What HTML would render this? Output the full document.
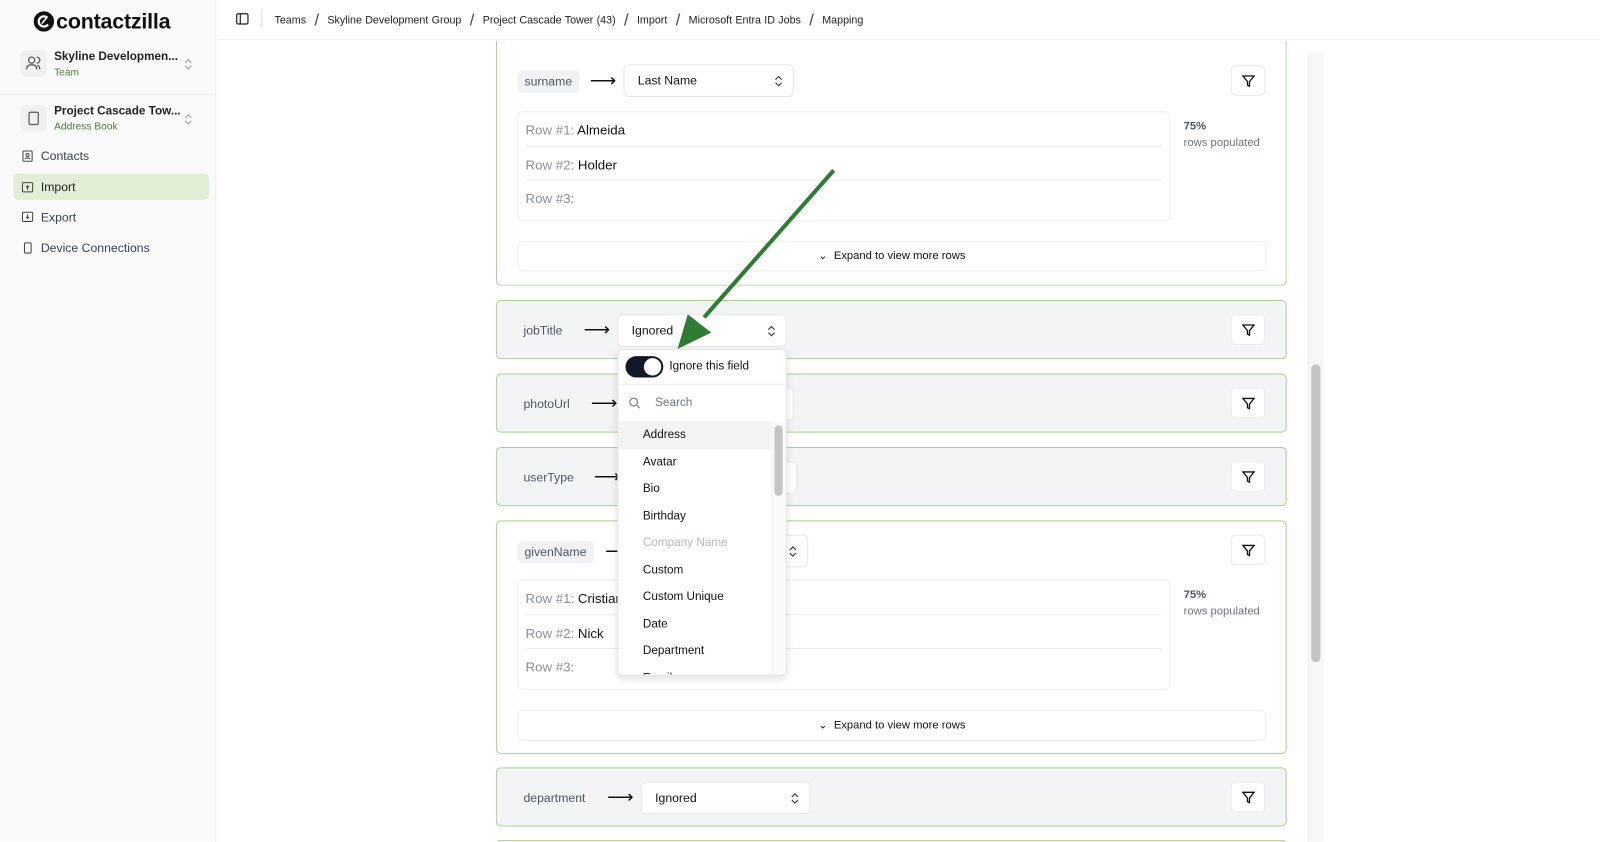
<!DOCTYPE html>
<html><head><style>
*{box-sizing:border-box;margin:0;padding:0}
html,body{width:1600px;height:842px;overflow:hidden;background:#fff;font-family:"Liberation Sans",sans-serif;color:#111827}
#clip{position:relative;width:1600px;height:842px;overflow:hidden}
#w{position:absolute;left:0;top:0;width:1568px;height:825px;overflow:hidden;transform:scale(1.02041);transform-origin:0 0}
.a{position:absolute}
.side{left:0;top:0;width:212px;height:825px;background:#fafafa;border-right:1px solid #ececec}
.nav{position:absolute;left:13px;width:192px;height:26px;border-radius:5px;font-size:12px;color:#374151;padding-left:27px;line-height:26px}
.nav svg{position:absolute;left:8px;top:7px}
.card{position:absolute;left:486px;width:775px;border:1px solid #a9d091;border-radius:5px;background:#fff}
.ig{background:#f3f4f6}
.lbl{position:absolute;font-size:12px;color:#4b5563}
.chip{background:#f1f2f4;border-radius:5px;padding:4px 7px}
.arr{position:absolute;font-size:18px;color:#111;line-height:20px}
.sel{position:absolute;height:32px;background:#fff;border:1px solid #e5e7eb;border-radius:5px;font-size:12px;line-height:30px;padding-left:13px;color:#111}
.sel svg{position:absolute;right:10px;top:10px}
.flt{position:absolute;right:20px;width:34px;height:30px;border:1px solid #e9eaec;border-radius:5px;background:#fff}
.flt svg{position:absolute;left:10px;top:8px}
.rows{position:absolute;left:20px;width:640px;border:1px solid #eceef0;border-radius:5px;background:#fff}
.row{height:33.5px;margin:0 7px;border-bottom:1px solid #eceef0;font-size:13px;line-height:35px;color:#111}
.row:last-child{border-bottom:none}
.row span{color:#8a8f98}
.pct{position:absolute;left:673px;font-size:11px;color:#6b7280;line-height:16px}
.pct b{color:#4b5563}
.exp{position:absolute;left:20px;width:734px;height:30px;border:1px solid #eceef0;border-radius:5px;font-size:11px;text-align:center;line-height:29px;color:#111}
.dd{left:605px;top:342px;width:166px;height:320px;background:#fff;border:1px solid #e5e7eb;border-radius:5px;box-shadow:0 3px 8px rgba(0,0,0,.12);overflow:hidden}
.it{height:26.5px;line-height:26.5px;font-size:11.5px;padding-left:24px;color:#111}
.sl{font-size:16px;color:#444;margin:0 5px;vertical-align:-2px}
</style></head><body><div id="clip"><div id="w">
<div class="a side">
 <div class="a" style="left:33px;top:10px;font-size:21px;font-weight:bold;color:#111;letter-spacing:-.2px"><svg width="20" height="20" viewBox="0 0 20 20" style="vertical-align:-3px;margin-right:2px"><circle cx="10" cy="10" r="10" fill="#111"/><path d="M13.5 6.5A5 5 0 1 0 14 13" fill="none" stroke="#fff" stroke-width="2.2"/><path d="M8 12l5-6" stroke="#fff" stroke-width="1.5"/></svg>contactzilla</div>
 <div class="a" style="left:20px;top:49px;width:26px;height:26px;background:#eef0f2;border-radius:6px"><svg width="26" height="26" viewBox="0 0 26 26" fill="none" stroke="#555" stroke-width="1.2"><circle cx="11" cy="10" r="3"/><path d="M6 19c0-3 2-4.5 5-4.5s5 1.5 5 4.5M16 7a3 3 0 010 6M19 19c0-2-1-3.5-2.5-4"/></svg></div>
 <div class="a" style="left:53px;top:50px;font-size:11.5px;font-weight:bold;color:#222">Skyline Developmen...</div>
 <div class="a" style="left:53px;top:66px;font-size:10px;color:#4b7a3a">Team</div>
 <svg class="a" style="left:180px;top:57px" width="9" height="12" viewBox="0 0 9 12" fill="none" stroke="#999" stroke-width="1"><path d="M1.5 4.5L4.5 1.5 7.5 4.5M1.5 7.5l3 3 3-3"/></svg>
 <div class="a" style="left:0;top:92px;width:211px;border-top:1px solid #ececec"></div>
 <div class="a" style="left:20px;top:103px;width:26px;height:26px;background:#eef0f2;border-radius:6px"><svg width="26" height="26" viewBox="0 0 26 26" fill="none" stroke="#555" stroke-width="1.2"><rect x="8.5" y="7" width="9" height="12" rx="1.5"/></svg></div>
 <div class="a" style="left:53px;top:103px;font-size:11.5px;font-weight:bold;color:#222">Project Cascade Tow...</div>
 <div class="a" style="left:53px;top:119px;font-size:10px;color:#4b7a3a">Address Book</div>
 <svg class="a" style="left:180px;top:111px" width="9" height="12" viewBox="0 0 9 12" fill="none" stroke="#999" stroke-width="1"><path d="M1.5 4.5L4.5 1.5 7.5 4.5M1.5 7.5l3 3 3-3"/></svg>
 <div class="nav" style="top:140px">Contacts<svg width="12" height="12" viewBox="0 0 12 12" fill="none" stroke="#444"><rect x="1.5" y="1" width="9" height="10" rx="1"/><circle cx="6" cy="5" r="1.5"/><path d="M3.5 9c.5-1.5 4.5-1.5 5 0"/></svg></div>
 <div class="nav" style="top:170px;background:#e2efd6;color:#222">Import<svg width="12" height="12" viewBox="0 0 12 12" fill="none" stroke="#444"><rect x="1" y="2" width="10" height="9" rx="1"/><path d="M6 9V5M4.5 6.5L6 5l1.5 1.5"/></svg></div>
 <div class="nav" style="top:200px">Export<svg width="12" height="12" viewBox="0 0 12 12" fill="none" stroke="#444"><rect x="1" y="1" width="10" height="9" rx="1"/><path d="M6 3v4M4.5 5.5L6 7l1.5-1.5"/></svg></div>
 <div class="nav" style="top:230px">Device Connections<svg width="12" height="12" viewBox="0 0 12 12" fill="none" stroke="#444"><rect x="3" y="1" width="6.5" height="10" rx="1"/></svg></div>
</div>
<div class="a" style="left:213px;top:38px;width:1355px;border-top:1px solid #eef0f2"></div>
<svg class="a" style="left:231px;top:12px" width="13" height="13" viewBox="0 0 13 13" fill="none" stroke="#222" stroke-width="1.2"><rect x="1" y="1.5" width="11" height="10" rx="1.5"/><path d="M4.5 1.5v10"/></svg>
<div class="a" style="left:256px;top:10px;height:17px;border-left:1px solid #ddd"></div>
<div class="a" style="left:269px;top:12px;font-size:10.5px;color:#222;word-spacing:.3px">Teams <span class="sl">/</span> Skyline Development Group <span class="sl">/</span> Project Cascade Tower (43) <span class="sl">/</span> Import <span class="sl">/</span> Microsoft Entra ID Jobs <span class="sl">/</span> Mapping</div>
<div class="a" style="left:1282px;top:52px;width:15px;height:773px;background:#f7f7f7;border-left:1px solid #eee"></div>
<div class="a" style="left:1285px;top:357px;width:9px;height:292px;background:#c4c4c4;border-radius:5px"></div>

<div class="card" style="top:40px;height:240px;border-top:none;border-radius:0 0 5px 5px">
 <div class="lbl chip" style="left:20px;top:29px">surname</div><div class="arr" style="left:91px;top:29px">⟶</div>
 <div class="sel" style="left:124px;top:23px;width:167px">Last Name<svg width="8" height="11" viewBox="0 0 8 11" fill="none" stroke="#333" stroke-width="1.1"><path d="M1 4l3-3 3 3M1 7l3 3 3-3"/></svg></div>
 <div class="flt" style="top:24px"><svg width="13" height="13" viewBox="0 0 13 13" fill="none" stroke="#111" stroke-width="1.3"><path d="M1 1.5h11L7.5 7v4.5l-2-1V7z"/></svg></div>
 <div class="rows" style="top:69px;height:108px"><div class="row"><span>Row #1:</span> Almeida</div><div class="row"><span>Row #2:</span> Holder</div><div class="row"><span>Row #3:</span></div></div>
 <div class="pct" style="top:76px"><b>75%</b><br>rows populated</div>
 <div class="exp" style="top:196px">⌄&nbsp; Expand to view more rows</div>
</div>
<div class="card ig" style="top:294px;height:58px">
 <div class="lbl" style="left:26px;top:22px">jobTitle</div><div class="arr" style="left:85px;top:18px">⟶</div>
 <div class="sel" style="left:118px;top:13px;width:166px">Ignored<svg width="8" height="11" viewBox="0 0 8 11" fill="none" stroke="#333" stroke-width="1.1"><path d="M1 4l3-3 3 3M1 7l3 3 3-3"/></svg></div>
 <div class="flt" style="top:13px"><svg width="13" height="13" viewBox="0 0 13 13" fill="none" stroke="#111" stroke-width="1.3"><path d="M1 1.5h11L7.5 7v4.5l-2-1V7z"/></svg></div>
</div>
<div class="card ig" style="top:366px;height:58px">
 <div class="lbl" style="left:26px;top:22px">photoUrl</div><div class="arr" style="left:92px;top:18px">⟶</div>
 <div class="sel" style="left:125px;top:13px;width:166px"></div>
 <div class="flt" style="top:13px"><svg width="13" height="13" viewBox="0 0 13 13" fill="none" stroke="#111" stroke-width="1.3"><path d="M1 1.5h11L7.5 7v4.5l-2-1V7z"/></svg></div>
</div>
<div class="card ig" style="top:438px;height:58px">
 <div class="lbl" style="left:26px;top:22px">userType</div><div class="arr" style="left:95px;top:18px">⟶</div>
 <div class="sel" style="left:128px;top:13px;width:166px"></div>
 <div class="flt" style="top:13px"><svg width="13" height="13" viewBox="0 0 13 13" fill="none" stroke="#111" stroke-width="1.3"><path d="M1 1.5h11L7.5 7v4.5l-2-1V7z"/></svg></div>
</div>
<div class="card" style="top:510px;height:229px">
 <div class="lbl chip" style="left:20px;top:19px">givenName</div><div class="arr" style="left:106px;top:19px">⟶</div>
 <div class="sel" style="left:140px;top:13px;width:165px"><svg width="8" height="11" viewBox="0 0 8 11" fill="none" stroke="#333" stroke-width="1.1"><path d="M1 4l3-3 3 3M1 7l3 3 3-3"/></svg></div>
 <div class="flt" style="top:13px"><svg width="13" height="13" viewBox="0 0 13 13" fill="none" stroke="#111" stroke-width="1.3"><path d="M1 1.5h11L7.5 7v4.5l-2-1V7z"/></svg></div>
 <div class="rows" style="top:57px;height:108px"><div class="row"><span>Row #1:</span> Cristian</div><div class="row"><span>Row #2:</span> Nick</div><div class="row"><span>Row #3:</span></div></div>
 <div class="pct" style="top:64px"><b>75%</b><br>rows populated</div>
 <div class="exp" style="top:185px">⌄&nbsp; Expand to view more rows</div>
</div>
<div class="card ig" style="top:752px;height:58px">
 <div class="lbl" style="left:26px;top:22px">department</div><div class="arr" style="left:108px;top:18px">⟶</div>
 <div class="sel" style="left:141px;top:13px;width:166px">Ignored<svg width="8" height="11" viewBox="0 0 8 11" fill="none" stroke="#333" stroke-width="1.1"><path d="M1 4l3-3 3 3M1 7l3 3 3-3"/></svg></div>
 <div class="flt" style="top:13px"><svg width="13" height="13" viewBox="0 0 13 13" fill="none" stroke="#111" stroke-width="1.3"><path d="M1 1.5h11L7.5 7v4.5l-2-1V7z"/></svg></div>
</div>
<div class="card" style="top:823px;height:30px;border-bottom:none"></div>

<div class="a dd">
 <div style="height:34px;border-bottom:1px solid #eee;position:relative">
  <div class="a" style="left:7px;top:6px;width:37px;height:21px;border-radius:11px;background:#111827"><div class="a" style="left:18px;top:2px;width:17px;height:17px;border-radius:50%;background:#fff"></div></div>
  <div class="a" style="left:50px;top:10px;font-size:11.5px;color:#111">Ignore this field</div>
 </div>
 <div style="height:36px;position:relative;font-size:11.5px;color:#6b7280"><svg class="a" style="left:10px;top:12px" width="12" height="12" viewBox="0 0 12 12" fill="none" stroke="#777" stroke-width="1.1"><circle cx="5" cy="5" r="3.8"/><path d="M8 8l3 3"/></svg><span class="a" style="left:36px;top:12px">Search</span></div>
 <div class="it" style="background:#f1f3f5;margin-right:15px">Address</div>
 <div class="it">Avatar</div><div class="it">Bio</div><div class="it">Birthday</div>
 <div class="it" style="color:#b5b9bf">Company Name</div>
 <div class="it">Custom</div><div class="it">Custom Unique</div><div class="it">Date</div><div class="it">Department</div><div class="it">Email</div>
 <div class="a" style="left:150px;top:70px;width:15px;height:250px;border-left:1px solid #eee;background:#fafafa"></div>
 <div class="a" style="left:153px;top:74px;width:8px;height:69px;background:#c4c4c4;border-radius:4px"></div>
</div>
<svg class="a" style="left:0;top:0" width="1568" height="825"><path d="M817 167L690 311" stroke="#2f7d32" stroke-width="4"/><polygon points="664,342 674,308 697,326" fill="#2f7d32"/></svg>
</div></div></body></html>
